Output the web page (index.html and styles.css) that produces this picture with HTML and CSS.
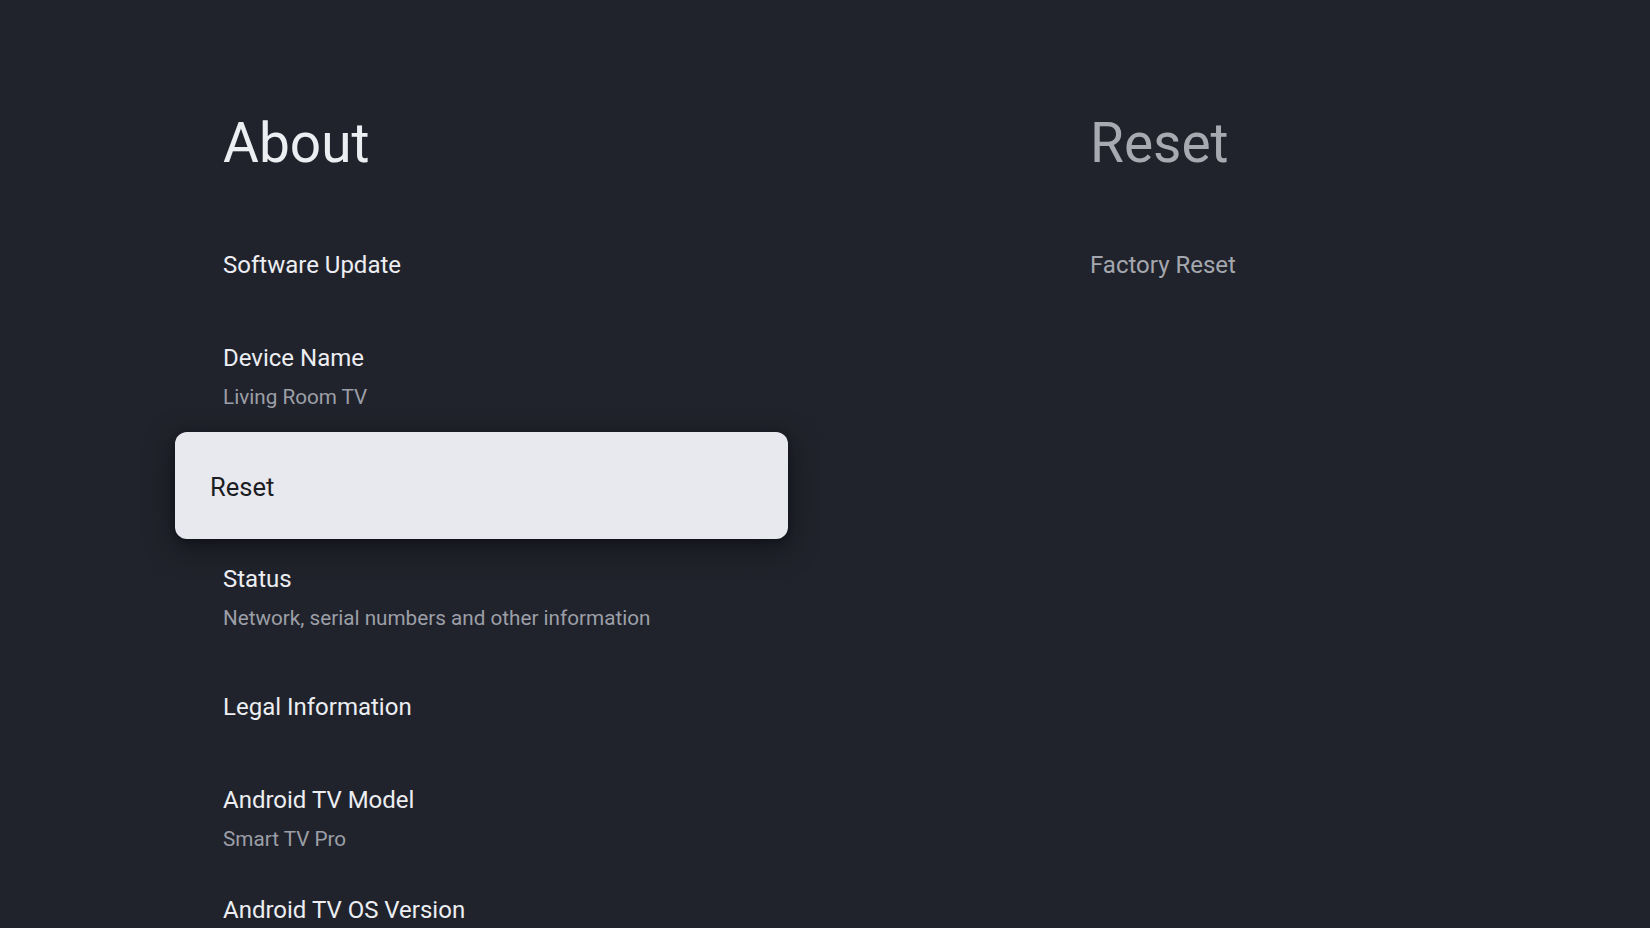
FILE: index.html
```html
<!DOCTYPE html>
<html lang="en">
<head>
<meta charset="utf-8">
<title>About</title>
<link rel="stylesheet" href="styles.css">
</head>
<body>
<main class="screen">
  <section class="pane pane-main">
    <h1 class="heading">About</h1>
    <ul class="list">
      <li class="row"><span class="title">Software Update</span></li>
      <li class="row two"><span class="title">Device Name</span><span class="sub">Living Room TV</span></li>
      <li class="row focus-row"><div class="card"><span class="card-title">Reset</span></div></li>
      <li class="row two status"><span class="title">Status</span><span class="sub">Network, serial numbers and other information</span></li>
      <li class="row"><span class="title">Legal Information</span></li>
      <li class="row two"><span class="title">Android TV Model</span><span class="sub">Smart TV Pro</span></li>
      <li class="row"><span class="title">Android TV OS Version</span></li>
    </ul>
  </section>
  <section class="pane pane-side">
    <h2 class="heading dim">Reset</h2>
    <ul class="list">
      <li class="row"><span class="title dim-item">Factory Reset</span></li>
    </ul>
  </section>
</main>
</body>
</html>
```

FILE: styles.css
```css
html, body {
  margin: 0;
  padding: 0;
  height: 100%;
  background: #21232c;
  overflow: hidden;
}

body {
  font-family: Roboto, "Noto Sans", "Liberation Sans", sans-serif;
  color: #eceef2;
}

.screen {
  display: grid;
  grid-template-columns: 867px 1fr;
  padding: 111px 0 0 223px;
  height: 100%;
  box-sizing: border-box;
}

.pane {
  display: flex;
  flex-direction: column;
}

.heading {
  margin: 0;
  font-size: 55px;
  line-height: 64px;
  font-weight: 400;
  color: #eceef2;
}

.heading.dim {
  color: #a7aab1;
}

.list {
  list-style: none;
  margin: 55px 0 0 0;
  padding: 0;
  display: flex;
  flex-direction: column;
}

.row {
  display: flex;
  flex-direction: column;
  box-sizing: border-box;
  height: 93px;
  padding-top: 20px;
}

.row.two {
  height: 110px;
}

.row.status {
  height: 128px;
}

.title {
  font-size: 24px;
  line-height: 30px;
  color: #eceef2;
}

.title.dim-item {
  color: #a4a7ae;
}

.sub {
  margin-top: 10px;
  font-size: 20.7px;
  line-height: 28px;
  color: #9c9fa7;
}

.focus-row {
  height: 111px;
  padding-top: 0;
}

.card {
  display: flex;
  align-items: center;
  box-sizing: border-box;
  width: 613px;
  height: 107px;
  margin: -1px 0 0 -48px;
  padding: 2px 0 0 35px;
  background: #e8e9ee;
  border-radius: 12px;
  box-shadow: 0 8px 28px rgba(8, 9, 14, 0.55), 0 2px 6px rgba(8, 9, 14, 0.4);
}

.card-title {
  font-size: 25.5px;
  line-height: 30px;
  color: #1c1d22;
}
```
